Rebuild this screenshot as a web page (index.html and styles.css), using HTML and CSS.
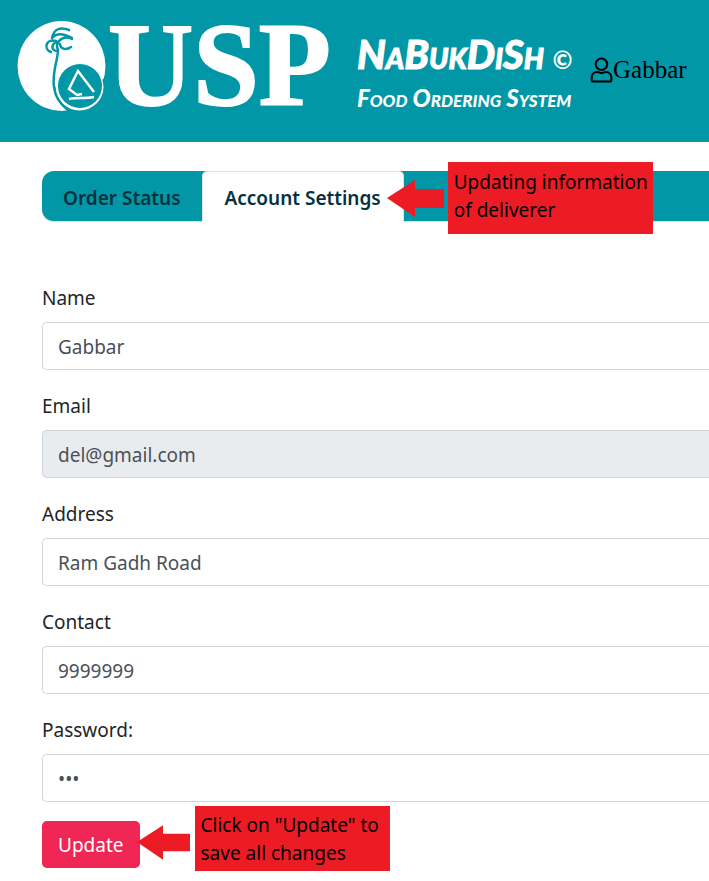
FILE: index.html
```
<!DOCTYPE html>
<html lang="en">
<head>
<meta charset="utf-8">
<meta name="viewport" content="width=device-width, initial-scale=1">
<title>NaBukDiSh – Account Settings</title>
<link rel="stylesheet" href="styles.css">
</head>
<body>
<header class="site-header">
  <div class="logo">
    <svg class="logo-mark" viewBox="0 0 90 90" aria-hidden="true">
      <ellipse cx="44.500" cy="45" rx="44" ry="45" fill="#fff"/>
      <path d="M37 66C39 78 44 85 52 91H82L90 60L86 58Z" fill="#0197a6"/>
      <ellipse cx="62.500" cy="66" rx="24" ry="23.500" fill="#fff"/>
      <path d="M40 38V66C42 52 50 43 63 43C74 43 83 51 85 60L88 45L74 28Z" fill="#fff"/>
      <ellipse cx="63" cy="65" rx="22" ry="22" fill="#0197a6"/>
      <g fill="none" stroke="#0197a6" stroke-linecap="round">
        <path d="M41 30C40 42 35 52 37 66C38 76 43 83 51 89" stroke-width="2.500"/>
        <path d="M35 17C37 7 44 6 52 9M36 16C40 12 46 12 55 17M41 29C37 20 47 14 55 18M43 23C44 29 50 29 54 26M39 20C29 17 26 28 34 31M41 30C34 30 34 24 39 21" stroke-width="2.500"/>
      </g>
      <path d="M77 71L61 50L52 68L60 74L65 73" fill="none" stroke="#fff" stroke-width="2.500"/>
      <path d="M52 78C60 76 67 78 77 76" fill="none" stroke="#fff" stroke-width="2.500"/>
    </svg>
    <span class="logo-text">USP</span>
  </div>
  <div class="brand">
    <h1 class="brand-name">NaBukDiSh <span class="brand-mark">©</span></h1>
    <p class="brand-tagline">Food Ordering System</p>
  </div>
  <a class="user" href="#">
    <svg class="user-icon" viewBox="0 0 22 25" aria-hidden="true">
      <circle cx="11" cy="7" r="5.500"/>
      <path d="M7 14.500C3.500 14.500 1.500 17 1.500 20V22Q1.500 23.500 3 23.500H19Q20.500 23.500 20.500 22V20C20.500 17 18.500 14.500 15 14.500C13 14.500 12.500 15.500 11 15.500S9 14.500 7 14.500Z"/>
    </svg>
    <span>Gabbar</span>
  </a>
</header>
<main class="page">
  <nav class="tabs">
    <a class="tab" href="#">Order Status</a>
    <div class="tab-anchor">
      <a class="tab tab-active" href="#" aria-current="page">Account Settings</a>
      <div class="callout callout-tab">
        <svg class="arrow" viewBox="0 0 57 37" aria-hidden="true"><path d="M0 18L28 0V9H57V28H28V37Z"/></svg>
        <p class="note note-tab">Updating information<br>of deliverer</p>
      </div>
    </div>
  </nav>
  <form class="form">
    <div class="fields">
      <div class="field">
        <label for="name">Name</label>
        <input id="name" type="text" value="Gabbar">
      </div>
      <div class="field">
        <label for="email">Email</label>
        <input id="email" type="email" value="del@gmail.com" readonly>
      </div>
      <div class="field">
        <label for="address">Address</label>
        <input id="address" type="text" value="Ram Gadh Road">
      </div>
      <div class="field">
        <label for="contact">Contact</label>
        <input id="contact" type="tel" value="9999999">
      </div>
      <div class="field">
        <label for="password">Password:</label>
        <input id="password" type="password" value="del">
      </div>
    </div>
    <div class="actions">
      <button class="update" type="button">Update</button>
      <div class="callout callout-update">
        <svg class="arrow" viewBox="0 0 57 37" aria-hidden="true"><path d="M0 18L28 0V9H57V28H28V37Z"/></svg>
        <p class="note">Click on "Update" to<br>save all changes</p>
      </div>
    </div>
  </form>
</main>
</body>
</html>
```
FILE: styles.css
```
* {
  box-sizing: border-box;
}

body {
  margin: 0;
  background: #fff;
  color: #212529;
  font: 19px/28px "Noto Sans", "Open Sans", sans-serif;
  overflow-x: hidden;
}

h1,
p {
  margin: 0;
}

a {
  color: inherit;
  text-decoration: none;
}

.site-header {
  display: flex;
  align-items: flex-start;
  height: 142px;
  padding-left: 17px;
  background: #0197a6;
  color: #fff;
}

.logo {
  display: flex;
  align-items: center;
  flex: none;
  gap: 1px;
  width: 340px;
  height: 132px;
}

.logo-mark {
  flex: none;
  width: 90px;
  height: 90px;
}

.logo-text {
  font: bold 118px/136px "Liberation Serif", serif;
  -webkit-text-stroke: 2px #fff;
}

.brand {
  flex: none;
  width: 233px;
  padding-top: 34px;
  font-family: Lato, sans-serif;
  font-style: italic;
  font-weight: 900;
  font-variant: small-caps;
  white-space: nowrap;
}

.brand-name {
  font-size: 40px;
  line-height: 40px;
  font-weight: 900;
  -webkit-text-stroke: 1px #fff;
}

.brand-mark {
  font-size: 24px;
  -webkit-text-stroke: 0;
}

.brand-tagline {
  margin-top: 4px;
  font-size: 24px;
  line-height: 28px;
}

.user {
  display: flex;
  align-items: center;
  margin-top: 56px;
  color: #000;
  font: 25px/28px "Liberation Serif", serif;
}

.user-icon {
  width: 23px;
  height: 26px;
  fill: none;
  stroke: #000;
  stroke-width: 2px;
}

.page {
  padding: 29px 0 12px 42px;
}

.tabs {
  display: flex;
  height: 51px;
  border-bottom: 1px solid #dee2e6;
  border-radius: 12px 0 0 12px;
  background: #0197a6;
}

.tab {
  display: block;
  height: 51px;
  padding: 12px 20px;
  border: 1px solid transparent;
  color: #04303f;
  font-weight: 600;
  white-space: nowrap;
}

.tab-active {
  padding: 12px 22px;
  border-color: #dee2e6 #dee2e6 #fff;
  border-radius: 5px 5px 0 0;
  background: #fff;
}

.tab-anchor {
  position: relative;
}

.callout {
  position: absolute;
  display: flex;
  align-items: center;
}

.callout-tab {
  top: -9px;
  left: calc(100% - 17px);
  gap: 4px;
}

.callout-update {
  top: -15px;
  left: calc(100% - 3px);
  gap: 5px;
}

.arrow {
  flex: none;
  width: 57px;
  height: 37px;
  fill: #ed1c24;
}

.callout-update .arrow {
  width: 53px;
  margin-top: 8px;
}

.note {
  min-width: 195px;
  padding: 5px 6px 4px;
  background: #ed1c24;
  color: #000;
  white-space: nowrap;
}

.note-tab {
  min-width: 205px;
  padding: 6px 5px 10px 6px;
}

.form {
  display: grid;
  gap: 19px;
  padding-top: 62px;
}

.fields {
  display: grid;
  gap: 22px;
}

.field {
  display: grid;
  gap: 10px;
}

.field input {
  width: 100%;
  height: 48px;
  padding: 2px 15px 0;
  border: 1px solid #ced4da;
  border-right: 0;
  border-radius: 5px 0 0 5px;
  background: #fff;
  color: #495057;
  font: inherit;
}

.field input:read-only {
  background: #e9ecef;
}

.actions {
  position: relative;
  justify-self: start;
}

.update {
  display: block;
  height: 47px;
  padding: 0 16px;
  border: 0;
  border-radius: 5px;
  background: #f02654;
  color: #fff;
  font: inherit;
}
```
